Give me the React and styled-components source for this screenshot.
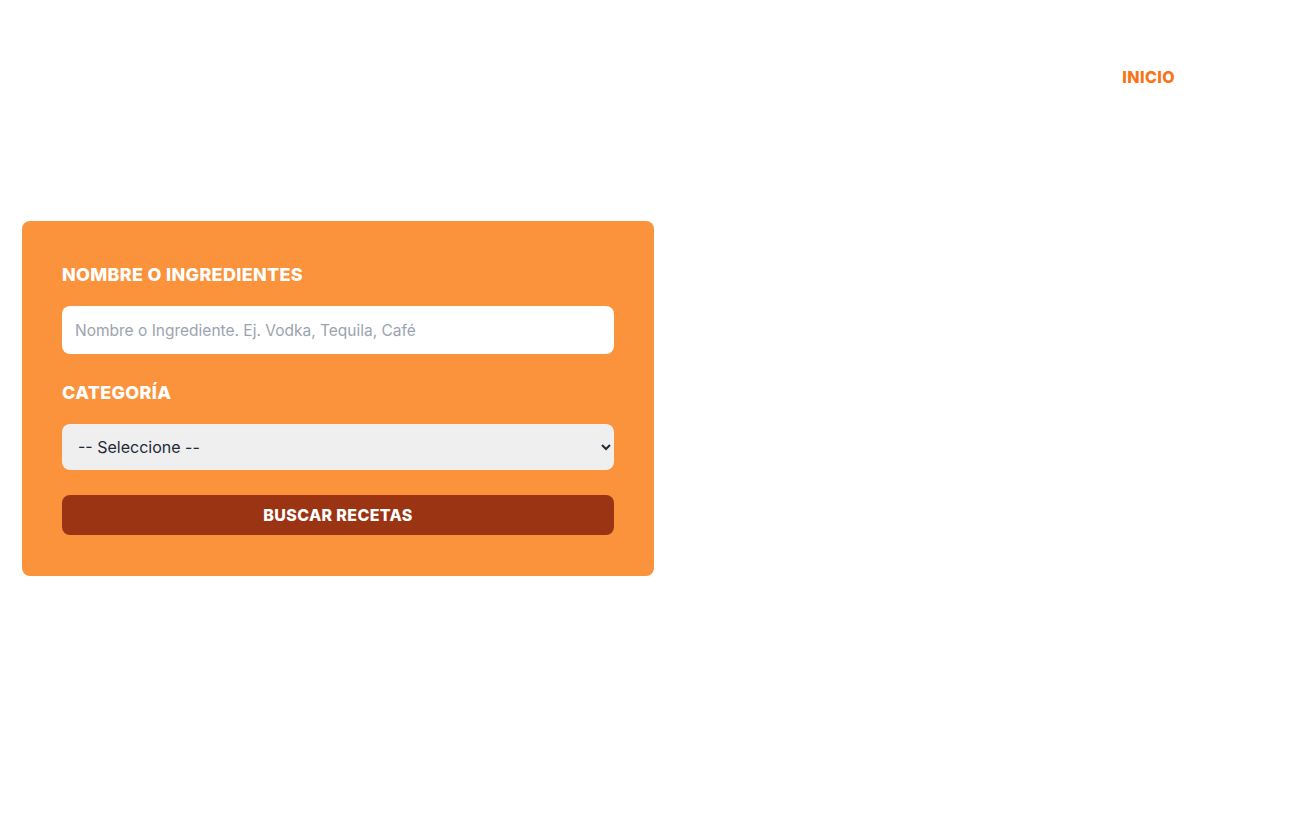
import React from 'react';
import styled, { createGlobalStyle } from 'styled-components';

const GlobalStyle = createGlobalStyle`
    * {
        box-sizing: border-box;
    }
    body {
        margin: 0;
        background: #ffffff;
        font-family: Inter, "Noto Sans", sans-serif;
    }
`;

const Header = styled.header`
    width: 1264px;
    margin: 0 auto;
    padding-top: 65px;
    height: 154px;
    display: flex;
    justify-content: flex-end;
`;

const Nav = styled.nav`
    display: flex;
    gap: 16px;
    padding-right: 111px;
`;

const NavLink = styled.a`
    color: #f97316;
    font-size: 16px;
    font-weight: 800;
    line-height: 24px;
    letter-spacing: 0.4px;
    text-transform: uppercase;
    text-decoration: none;
`;

const Main = styled.main`
    width: 1264px;
    margin: 67px auto 0;
`;

const Form = styled.form`
    width: 50%;
    background-color: #fb923c;
    border-radius: 8px;
    padding: 40px 40px 41px;
    display: flex;
    flex-direction: column;
`;

const Field = styled.div`
    display: flex;
    flex-direction: column;
    gap: 17px;
    margin-bottom: 25px;
`;

const Label = styled.label`
    color: #ffffff;
    font-size: 18px;
    font-weight: 800;
    line-height: 28px;
    letter-spacing: 0.3px;
    text-transform: uppercase;
`;

const Input = styled.input`
    height: 48px;
    padding: 0 13px;
    border: none;
    border-radius: 8px;
    background: #ffffff;
    font-family: Inter, sans-serif;
    font-size: 15.5px;
    outline: none;
    &::placeholder {
        color: #9ca3af;
    }
`;

const Select = styled.select`
    height: 46px;
    padding: 0 12px;
    border: none;
    border-radius: 8px;
    background: #efefef;
    color: #1f2937;
    font-family: Inter, sans-serif;
    font-size: 16px;
    outline: none;
`;

const Button = styled.button`
    height: 40px;
    border: none;
    border-radius: 8px;
    background-color: #9a3412;
    color: #ffffff;
    font-family: Inter, sans-serif;
    font-size: 16px;
    font-weight: 800;
    letter-spacing: 0.35px;
    text-transform: uppercase;
    cursor: pointer;
`;

export default function App() {
    return (
        <>
            <GlobalStyle />
            <Header>
                <Nav>
                    <NavLink href="#">Inicio</NavLink>
                </Nav>
            </Header>
            <Main>
                <Form onSubmit={e => e.preventDefault()}>
                    <Field>
                        <Label htmlFor="ingredient">Nombre o Ingredientes</Label>
                        <Input id="ingredient" type="text" placeholder="Nombre o Ingrediente. Ej. Vodka, Tequila, Café"/>
                    </Field>
                    <Field>
                        <Label htmlFor="category">Categoría</Label>
                        <Select id="category">
                            <option>-- Seleccione --</option>
                        </Select>
                    </Field>
                    <Button type="submit">Buscar Recetas</Button>
                </Form>
            </Main>
        </>
    );
}
